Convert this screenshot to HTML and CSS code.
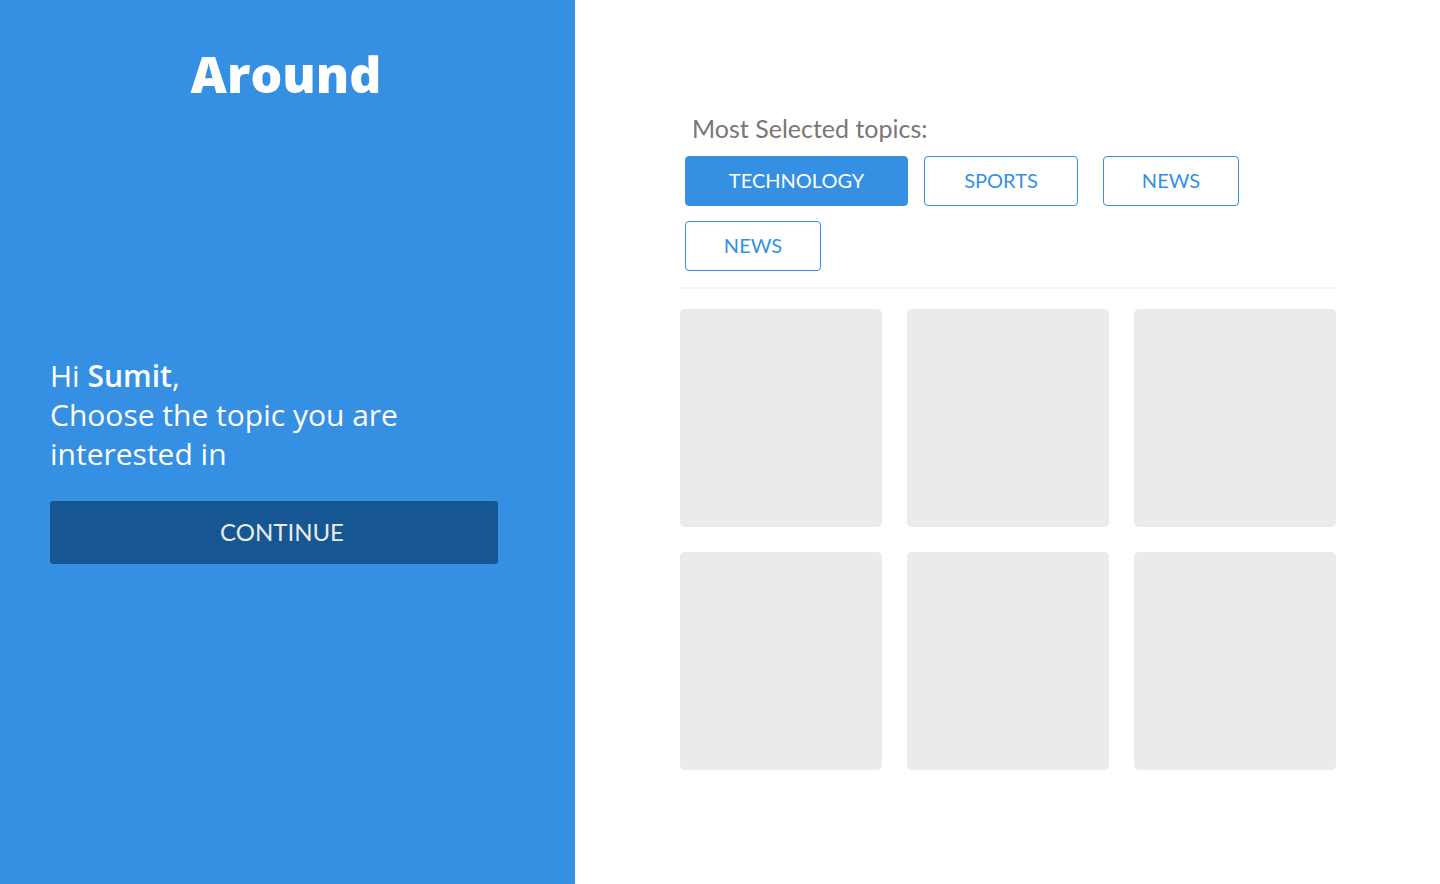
FILE: index.html
```html
<!DOCTYPE html>
<html lang="en">
<head>
<meta charset="utf-8">
<title>Around</title>
<link rel="stylesheet" href="styles.css">
</head>
<body>
<div class="page">
  <aside class="intro">
    <h1 class="brand">Around</h1>
    <div class="welcome">
      <p class="greeting">Hi <strong>Sumit</strong>,<br>Choose the topic you are interested in</p>
      <button class="continue" type="button">CONTINUE</button>
    </div>
  </aside>
  <main class="topics">
    <h2 class="heading">Most Selected topics:</h2>
    <div class="tags">
      <button class="tag tag-wide tag-active" type="button">TECHNOLOGY</button>
      <button class="tag tag-medium" type="button">SPORTS</button>
      <button class="tag" type="button">NEWS</button>
      <button class="tag" type="button">NEWS</button>
    </div>
    <div class="cards">
      <div class="card"></div>
      <div class="card"></div>
      <div class="card"></div>
      <div class="card"></div>
      <div class="card"></div>
      <div class="card"></div>
    </div>
  </main>
</div>
</body>
</html>
```
FILE: styles.css
```css
* { box-sizing: border-box; }
body { margin: 0; background: #fff; font-family: Lato, sans-serif; }
.page { display: grid; grid-template-columns: 575fr 865fr; min-height: 100vh; }
.intro { background: #358fe3; color: #fff; padding: 40px 77px 0 50px; }
.brand { margin: 0 0 248px; padding-left: 24px; font-family: "Open Sans", sans-serif; font-size: 50px; font-weight: 800; line-height: 68px; text-align: center; }
.greeting { margin: 0 0 28px; font-family: "Open Sans", sans-serif; font-size: 30px; font-weight: 400; line-height: 39px; }
.greeting strong { font-weight: 600; }
.continue { display: block; width: 100%; height: 63px; padding: 0 0 2px 16px; border: 0; border-radius: 3px; background: #165692; color: #ebebeb; font-family: Lato, sans-serif; font-size: 24px; }
.topics { padding: 112px 104px 0 105px; }
.heading { margin: 0; padding-left: 12px; color: #7d7575; font-size: 25px; font-weight: 400; line-height: 32px; }
.tags { display: flex; flex-wrap: wrap; gap: 15px 16px; padding: 12px 5px 16px; border-bottom: 2px solid #f5f5f5; }
.tag { width: 136px; height: 50px; padding: 0 0 2px; border: 1px solid #358fe3; border-radius: 4px; background: #fff; color: #358fe3; font-family: Lato, sans-serif; font-size: 20px; font-weight: 400; }
.tag-medium { width: 154px; margin-right: 9px; }
.tag-wide { width: 223px; }
.tag-active { background: #358fe3; color: #fff; }
.cards { display: grid; grid-template-columns: repeat(3, 1fr); gap: 25px; padding-top: 20px; }
.card { height: 218px; border-radius: 5px; background: #ebebeb; }
```
